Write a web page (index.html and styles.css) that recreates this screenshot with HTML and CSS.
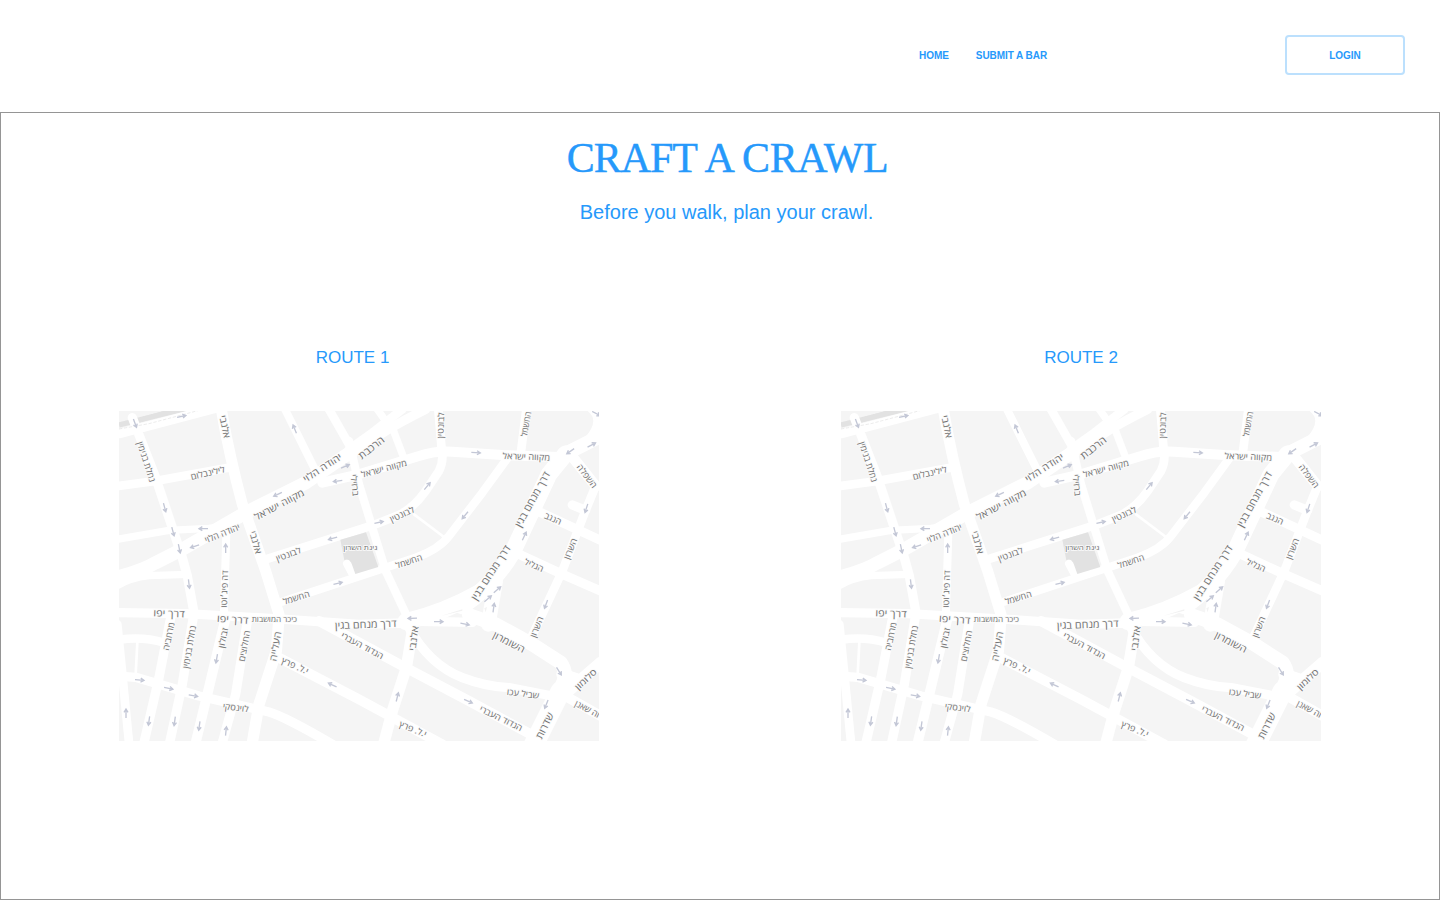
FILE: index.html
```html
<!DOCTYPE html>
<html lang="en">
<head>
<meta charset="utf-8">
<title>Craft a Crawl</title>
<link rel="stylesheet" href="styles.css">
</head>
<body>
<header class="header">
  <nav class="nav"><a class="link">HOME</a><a class="link">SUBMIT A BAR</a></nav>
  <button class="login">LOGIN</button>
</header>
<main class="main">
  <h1 class="title"><span class="tight">CRAFT</span> A CRAWL</h1>
  <p class="subtitle">Before you walk, plan your crawl.</p>
  <div class="routes">
    <section class="route"><h2 class="name name-first">ROUTE 1</h2><svg class="map" viewBox="0 0 1440 990"></svg></section>
    <section class="route"><h2 class="name">ROUTE 2</h2><svg class="map" viewBox="0 0 1440 990"></svg></section>
  </div>
</main>
<script src="map.js"></script>
</body>
</html>
```
FILE: styles.css
```css
* { box-sizing: border-box; }
body { margin: 0; height: 900px; display: flex; flex-direction: column; background: #fff; color: #2699fb; font-family: "Liberation Sans", Arial, sans-serif; overflow: hidden; }
.header { height: 112px; flex: none; display: flex; justify-content: flex-end; padding: 35px 35px 0 0; }
.nav { display: flex; gap: 27px; width: 366px; height: 40px; align-items: center; padding-top: 2px; font-size: 10px; font-weight: 700; line-height: 12px; }
.link { white-space: nowrap; letter-spacing: -0.06px; }
.login { width: 120px; height: 40px; border: 2px solid #bce0fd; border-radius: 4px; background: #fff; color: #2699fb; font: 700 10px/12px "Liberation Sans", Arial, sans-serif; letter-spacing: -0.06px; padding: 2px 0 0; }
.main { flex: 1; border: 1px solid #959595; display: flex; flex-direction: column; }
.title { margin: 20px 0 0 15px; text-align: center; font: 400 42px/50px "Liberation Serif", "Times New Roman", serif; letter-spacing: -0.45px; -webkit-text-stroke: 0.4px #2699fb; }
.tight { letter-spacing: -1.1px; }
.subtitle { margin: 17px 0 0 13px; text-align: center; font-size: 20px; line-height: 24px; }
.routes { display: flex; gap: 242px; padding: 123px 0 0 118px; }
.route { width: 480px; }
.name { margin: 0 0 42px; text-align: center; font-size: 17px; font-weight: 400; line-height: 22px; }
.name-first { padding-right: 13px; }
.map { display: block; width: 480px; height: 330px; background: #f5f5f5; overflow: hidden; }
.road { fill: none; stroke: #fff; stroke-linecap: round; stroke-linejoin: round; }
.rail { fill: none; stroke: #e2e2e2; }
.park { fill: #e2e2e2; }
.median { fill: #f2f2f2; }
.arrow { fill: none; stroke: #c3c7d6; stroke-width: 4; }
.label { fill: #707070; stroke: #fafafa; stroke-width: 5; paint-order: stroke; text-anchor: middle; direction: rtl; font-family: "Open Sans", "Liberation Sans", "DejaVu Sans", sans-serif; }
```
FILE: map.js
```js
const roads = [
  [28, 'M0 68L290 -8'],
  [28, 'M40 20L110 200L190 440L205 495L225 605L190 820L152 995'],
  [26, 'M-5 225L110 210L340 168'],
  [33, 'M307 -5Q330 130 370 280L440 480L480 610'],
  [40, 'M-20 502Q70 480 110 455L190 415L380 305L560 215L700 120'],
  [26, 'M690 115L760 65L850 -5'],
  [28, 'M690 130L800 60Q850 30 920 -5'],
  [22, 'M-5 385L150 358L270 352L330 345'],
  [24, 'M498 -5L590 180'],
  [26, 'M630 -5L690 100'],
  [22, 'M775 -5L800 30'],
  [24, 'M322 365L315 600'],
  [26, 'M440 445L770 340L840 312Q885 290 920 240L960 180Q975 150 968 115L958 -5'],
  [30, 'M610 215L720 190L900 135Q950 118 1000 122L1150 132L1320 138'],
  [25, 'M690 90L720 220L760 350L800 480L875 640'],
  [25, 'M490 572L800 470L890 440Q960 415 990 375L1090 245L1170 135'],
  [26, 'M1205 130L1222 -5'],
  [22, 'M820 50L856 145'],
  [8, 'M885 310L975 378'],
  [50, 'M1340 128L1290 190L1180 425Q1120 525 1030 585'],
  [42, 'M1445 75L1340 128'],
  [50, 'M1080 545Q980 602 860 632'],
  [28, 'M860 636L720 640L500 625L200 608L-5 605'],
  [32, 'M1405 -20Q1470 20 1410 90'],
  [32, 'M1350 125L1430 225'],
  [26, 'M1430 225L1395 310L1330 480L1230 695'],
  [28, 'M1255 300L1445 388'],
  [28, 'M1200 430L1330 490L1445 540'],
  [28, 'M1360 282L1400 298'],
  [28, 'M860 630L1060 634'],
  [42, 'M1050 612L1130 640L1240 700L1325 755Q1350 790 1325 830'],
  [44, 'M1130 510L1108 640'],
  [60, 'M1325 840L1245 1000'],
  [36, 'M1330 855L1445 755M1330 790L1375 805'],
  [30, 'M1330 850L1445 915'],
  [28, 'M870 650Q930 760 1030 800Q1100 827 1170 830L1300 855'],
  [34, 'M885 630L862 770L820 900L795 995'],
  [30, 'M600 630L860 770L1050 870L1250 978'],
  [30, 'M470 735L720 865L970 1000'],
  [34, 'M480 620L472 720L420 880L400 995'],
  [28, 'M385 630L350 850L310 995'],
  [30, 'M320 620L265 850L230 995'],
  [28, 'M155 620L120 800L75 995'],
  [28, 'M-5 795L50 799L240 855L450 903Q500 918 640 1000'],
  [26, 'M-5 640L8 770L30 995'],
  [26, 'M-5 687Q70 675 135 695'],
  [8, 'M55 695L50 790'],
  [22, 'M-5 524Q35 500 90 494L205 490'],
  [24, 'M684 458L700 488'],
];

// x, y, angle, width, size, text
const labels = [
  [82, 152, 72, 126, 27, 'נחלת בנימין'],
  [318, 47, 78, 70, 28, 'אלנבי'],
  [266, 186, -13, 104, 26, 'לילינבלום'],
  [610, 170, -33, 132, 29, 'יהודה הלוי'],
  [481, 281, -28, 165, 29, 'מקווה ישראל'],
  [310, 367, -22, 112, 27, 'יהודה הלוי'],
  [410, 394, 74, 70, 28, 'אלנבי'],
  [508, 430, -20, 78, 26, 'לבונטין'],
  [707, 222, 84, 66, 26, 'ברזילי'],
  [757, 110, -38, 90, 30, 'הרכבת'],
  [795, 173, -15, 140, 26, 'מקווה ישראל'],
  [965, 43, -88, 78, 26, 'לבונטין'],
  [1221, 39, -80, 76, 26, 'החשמל'],
  [1222, 137, 2, 142, 26, 'מקווה ישראל'],
  [849, 310, -24, 78, 26, 'לבונטין'],
  [870, 451, -19, 82, 26, 'החשמל'],
  [1240, 265, -61, 185, 30, 'דרך מנחם בגין'],
  [1115, 485, -57, 190, 30, 'דרך מנחם בגין'],
  [1404, 195, 53, 82, 26, 'השפלה'],
  [1302, 323, 24, 52, 26, 'הנגב'],
  [1245, 463, 23, 60, 26, 'הגליל'],
  [1354, 413, -68, 66, 26, 'השרון'],
  [1253, 648, -68, 66, 26, 'השרון'],
  [724, 411, 0, 103, 20, 'גינת השרון'],
  [316, 534, -88, 112, 26, 'דה פיג׳וטו'],
  [150, 607, 2, 94, 29, 'דרך יפו'],
  [341, 625, 4, 94, 29, 'דרך יפו'],
  [466, 624, 0, 136, 22, 'כיכר המושבות'],
  [532, 560, -17, 82, 26, 'החשמל'],
  [740, 640, -2, 185, 30, 'דרך מנחם בגין'],
  [149, 676, -78, 86, 26, 'מרחביה'],
  [211, 708, -80, 130, 27, 'נחלת בנימין'],
  [312, 681, -78, 62, 26, 'זבולון'],
  [376, 705, -79, 94, 26, 'החלוצים'],
  [469, 706, -80, 90, 29, 'העלייה'],
  [528, 764, 24, 86, 26, 'י.ל. פרץ'],
  [350, 890, 7, 78, 26, 'לוינסקי'],
  [730, 704, 28, 140, 26, 'הגדוד העברי'],
  [884, 682, -82, 75, 28, 'אלנבי'],
  [1170, 693, 27, 104, 29, 'השומרון'],
  [1212, 848, 7, 98, 26, 'שביל עכו'],
  [1146, 922, 26, 140, 26, 'הגדוד העברי'],
  [882, 954, 22, 86, 26, 'י.ל. פרץ'],
  [1400, 805, -43, 78, 26, 'סלומון'],
  [1405, 894, 28, 80, 26, 'וה שאנן'],
  [1277, 944, -64, 84, 30, 'שדרות'],
];

// x, y, heading
const arrows = [
  [48, 37, 70], [188, 16, -12], [527, 54, -112], [679, 166, -24], [656, 210, 172],
  [476, 250, 155], [137, 290, 75], [162, 362, 75], [181, 413, 78], [253, 353, 180],
  [227, 406, 162], [320, 412, -90], [641, 382, 164], [1071, 125, 3], [925, 225, -50],
  [780, 334, -12], [1038, 313, 130], [1354, 121, 145], [1418, 102, -28], [1402, 292, 108],
  [1216, 375, -65], [210, 519, 83], [657, 517, -14], [293, 743, 100], [62, 807, 5],
  [149, 832, 12], [223, 854, 10], [21, 907, -90], [90, 930, 98], [167, 931, 98],
  [241, 945, 98], [321, 960, -84], [640, 822, 205], [880, 622, 178], [959, 632, 0],
  [1038, 639, 12], [1107, 563, -40], [1135, 536, -40], [1124, 590, -82], [1281, 580, 110],
  [1320, 781, 58], [1282, 880, 112], [835, 858, -76], [1048, 871, 24], [1432, 8, 28],
];

const markup = [
  '<path class="rail" stroke-width="16" d="M0 42L210 -10"/>',
  ...roads.map(([w, d]) => `<path class="road" stroke-width="${w}" d="${d}"/>`),
  '<path class="rail" stroke-width="14" d="M60 28L180 -6"/>',
  '<path class="rail" stroke-width="2" stroke-dasharray="10 5" d="M0 54L90 38L240 -2"/>',
  '<path class="park" d="M664 386L741 364L778 468L709 489L697 455Q688 440 676 448Z"/>',
  '<path class="median" d="M965 615L1030 595L1030 599Z"/>',
  '<path class="median" d="M1096 592L1104 588L1100 604Z"/>',
  ...arrows.map(([x, y, a]) => `<path class="arrow" transform="translate(${x} ${y}) rotate(${a})" d="M-14 0H12M3 -6L13 0L3 6"/>`),
  ...labels.map(([x, y, a, w, s, t]) => `<text class="label" transform="translate(${x} ${y}) rotate(${a})" y="${s * 0.36}" font-size="${s}" textLength="${w}" lengthAdjust="spacingAndGlyphs">${t}</text>`),
].join('');

document.querySelectorAll('.map').forEach((map) => { map.innerHTML = markup; });
```
